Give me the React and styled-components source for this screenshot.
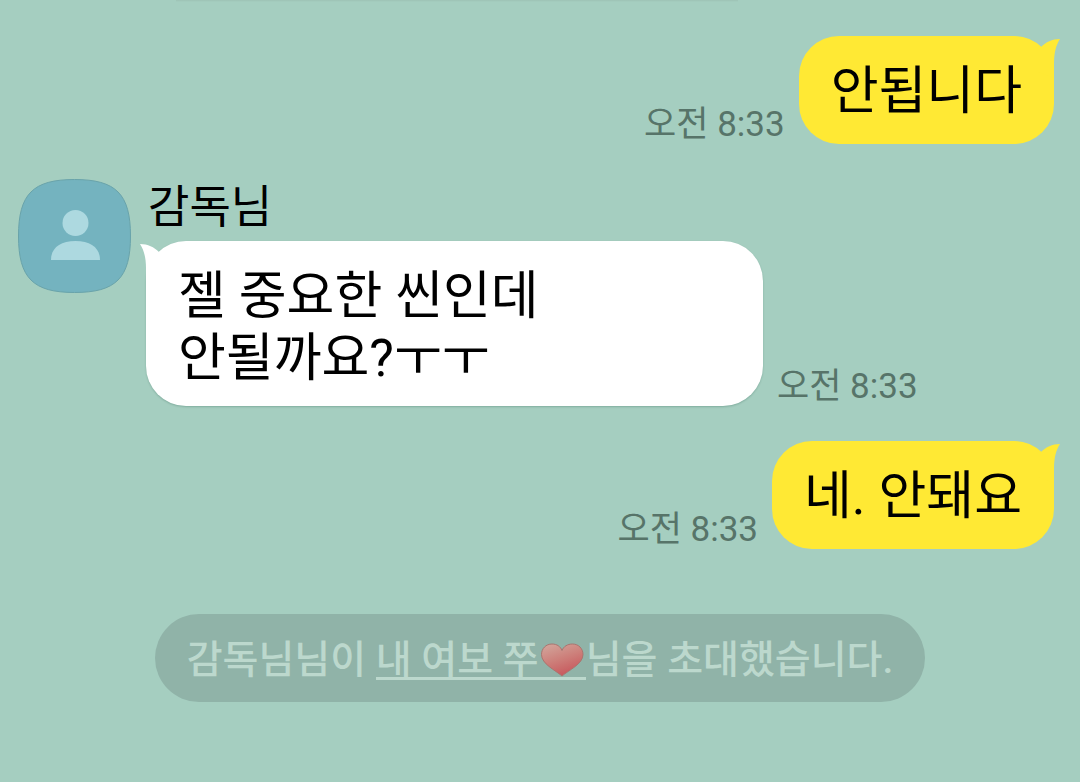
import React from "react";
import styled, {createGlobalStyle, css} from "styled-components";

const GlobalStyle = createGlobalStyle`
  * {
    box-sizing: border-box;
  }

  body {
    margin: 0;
    background: #a5cec0;
    color: #000;
    font-family: Roboto, "Noto Sans CJK KR", sans-serif;
    word-break: keep-all;
  }
`
const Room = styled.main`
  min-height: 100vh;
  display: flex;
  flex-direction: column;
  overflow: hidden;
`
// bottom shadow of the message that is scrolled out above
const ScrolledBubble = styled.div`
  width: 52%;
  height: 2px;
  margin-left: 176px;
  background: linear-gradient(#9dc2b5, #a5cec0);
`
const MessageList = styled.ol`
  list-style: none;
  margin: 0;
  padding: 34px 26px 0 18px;
  display: flex;
  flex-direction: column;
  gap: 35px;
`
const Message = styled.li`
  display: flex;
  justify-content: ${({$mine}) => ($mine ? "flex-end" : "flex-start")};
  gap: 15px;
`
const MessageBody = styled.div`
  flex: 1;
  min-width: 0;
`
const Sender = styled.div`
  font-size: 45px;
  line-height: 58px;
  padding: 0 2px 4px;
`
const BubbleLine = styled.div`
  display: flex;
  align-items: flex-end;
  gap: 14px;
  flex-direction: ${({$mine}) => ($mine ? "row-reverse" : "row")};
`
const Bubble = styled.div`
  position: relative;
  max-width: 617px;
  min-height: 108px;
  padding: 25px 32px 16px;
  border-radius: 40px;
  font-size: 52px;
  line-height: 62px;
  ${({$mine}) => $mine
    ? css`background: #ffe934;`
    : css`
      background: #fff;
      box-shadow: 0 1px 2px rgba(0, 60, 40, 0.22);
    `}
`
const Tail = styled.svg`
  position: absolute;
  top: 0;
  width: 24px;
  height: 44px;
  ${({$mine}) => $mine
    ? css`
      right: -6px;
      fill: #ffe934;
    `
    : css`
      left: -6px;
      fill: #fff;
      transform: scaleX(-1);
    `}
`
const Time = styled.time`
  flex: none;
  color: #577469;
  font-size: 35px;
  line-height: 38px;
`
const Avatar = styled.svg`
  flex: none;
  width: 113px;
  height: 114px;
`
const Notice = styled.p`
  align-self: center;
  margin: 65px 16px 0;
  padding: 22px 32px 18px;
  border-radius: 44px;
  background: #90b3a8;
  color: #bcd8cd;
  font-size: 39px;
  font-weight: 500;
  line-height: 48px;
`
const Invitee = styled.a`
  color: inherit;
  text-decoration: none;
  background: linear-gradient(#bcd8cd, #bcd8cd) 0 calc(100% - 3px) / 100% 3px no-repeat;
`
const Heart = styled.svg`
  width: 44px;
  height: 34px;
  margin: 0 2px 0 1px;
  vertical-align: -4px;
`

const HeartIcon = () => (
    <Heart viewBox="0 0 44 34" role="img" aria-label="❤">
        <defs>
            <linearGradient id="heart-fill" x1="0.15" y1="0" x2="0.6" y2="1">
                <stop offset="0" stopColor="#d2a59b"/>
                <stop offset="0.5" stopColor="#cd7f7a"/>
                <stop offset="1" stopColor="#c7565b"/>
            </linearGradient>
        </defs>
        <path d="M22 33C15 27 1.500 21 1.500 11.500C1.500 5.500 6 1 12 1C17 1 20.500 3.500 22 7.500C23.500 3.500 27.500 1 32.500 1C38.500 1 43 5.500 43 11.500C43 21 29 27 22 33Z"
              fill="url(#heart-fill)" stroke="#a9756f" strokeWidth="1"/>
    </Heart>
)

const AvatarIcon = () => (
    <Avatar viewBox="0 0 113 114" role="img" aria-label="감독님">
        <path d="M56.500 0.500C98 0.500 112.500 15 112.500 57C112.500 99 98 113.500 56.500 113.500C15 113.500 0.500 99 0.500 57C0.500 15 15 0.500 56.500 0.500Z"
              fill="#74b3bf" stroke="#69a3aa"/>
        <circle cx="57.500" cy="44" r="13" fill="#add9e0"/>
        <path d="M33 81C33 69 42 62 57.500 62C73 62 82 69 82 81Z" fill="#add9e0"/>
    </Avatar>
)

const MessageBubble = ({mine, text, time}) => (
    <BubbleLine $mine={mine}>
        <Bubble $mine={mine}>
            <Tail $mine={mine} viewBox="0 0 24 44" aria-hidden="true">
                <path d="M5 11C10 6 16 3 24 3C20 9 18 17 18 27V42L2 36V9Z"/>
            </Tail>
            {text}
        </Bubble>
        <Time>{time}</Time>
    </BubbleLine>
)

const messages = [
    {id: 1, mine: true, text: "안됩니다", time: "오전 8:33"},
    {id: 2, sender: "감독님", text: "젤 중요한 씬인데 안될까요?ㅜㅜ", time: "오전 8:33"},
    {id: 3, mine: true, text: "네. 안돼요", time: "오전 8:33"},
]

export default function App() {
    return (
        <Room>
            <GlobalStyle/>
            <ScrolledBubble/>
            <MessageList>
                {messages.map(({id, mine, sender, text, time}) => (
                    <Message key={id} $mine={mine}>
                        {!mine && <AvatarIcon/>}
                        <MessageBody>
                            {sender && <Sender>{sender}</Sender>}
                            <MessageBubble mine={mine} text={text} time={time}/>
                        </MessageBody>
                    </Message>
                ))}
            </MessageList>
            <Notice>
                감독님님이 <Invitee href="#invitee">내 여보 쭈<HeartIcon/></Invitee>님을 초대했습니다.
            </Notice>
        </Room>
    )
}
